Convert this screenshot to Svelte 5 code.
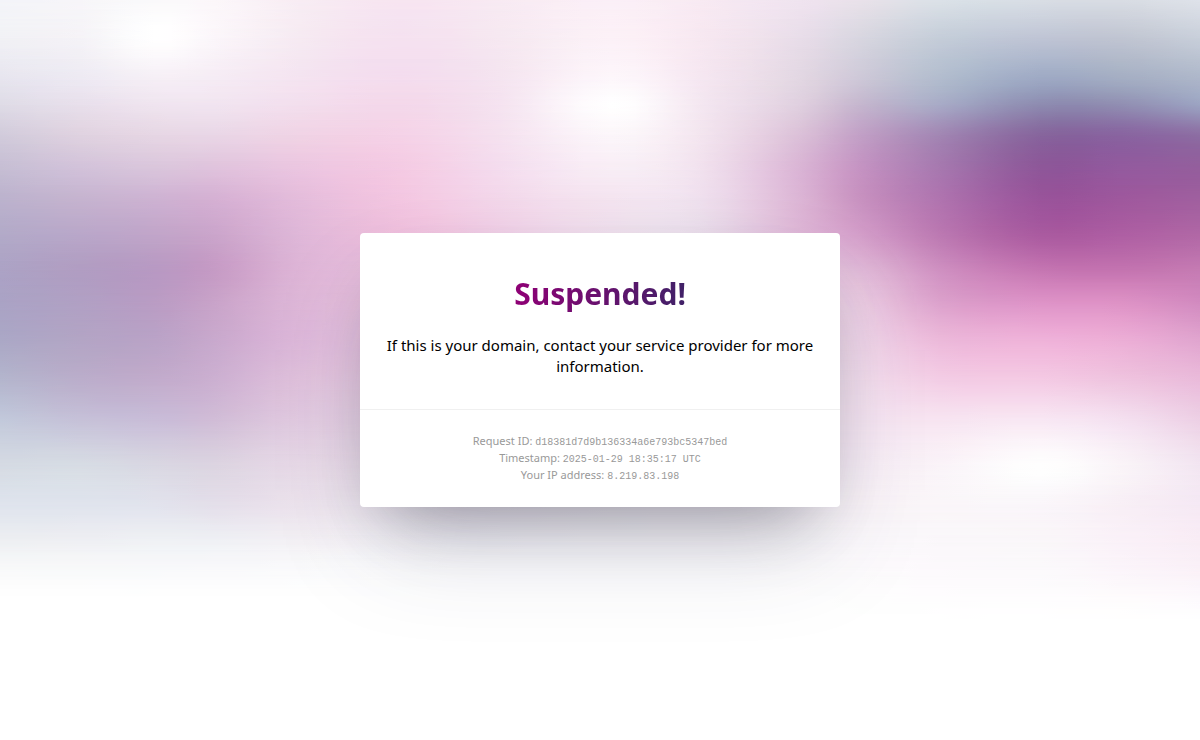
<script lang="ts">
  const details = [
    { label: 'Request ID:', value: 'd18381d7d9b136334a6e793bc5347bed' },
    { label: 'Timestamp:', value: '2025-01-29 18:35:17 UTC' },
    { label: 'Your IP address:', value: '8.219.83.198' }
  ];

  // Colour mesh for the backdrop: columns and rows are on a 1200 x 740 grid
  const columns = [0, 80, 155, 215, 300, 400, 500, 612, 700, 800, 860, 940, 1040, 1120, 1200];
  const mesh = [
    { y: 0, colors: 'f4f5f9 f7f6f9 faf9fb fcf7fa f8edf4 f7e5f1 f8eaf3 fbf0f7 f8eaf3 f0e4f0 e9e2ea dce2e8 d9dee5 d9dde4 dfe3ea' },
    { y: 38, colors: 'f1f1f5 f5f3f7 ffffff fbf6fa f6eaf2 f5e1f0 f6e8f1 fcf1f7 f7e8f1 e8dde9 d8d6e0 c5cdd9 bfc5d5 c0c5d2 c8cfda' },
    { y: 80, colors: 'e6e4ee ede9f2 f5eef5 f5ebf4 f4e3f0 f4dcee f5e4f0 fdf7fb f5e7f1 e2d6e2 cdc7d7 b1bbcd 9da8c3 a3acc2 acb5c9' },
    { y: 105, colors: 'dedbe6 e8dfeb efe4ef f1e4f0 f3deed f4d8ea f5e3f0 ffffff f4e7f1 dfcfdf c5b6ce a8aac6 8e8bb0 918eb2 9ca3c2' },
    { y: 135, colors: 'd1cbdb dfd2e0 e6d6e4 e9d6e6 f0d3e5 f5d2e7 f5e1ef fcf6fa f3e5ef dbc0d8 c2a0c6 a286b3 87659d 8964a0 8d6ea3' },
    { y: 170, colors: 'c5bdd3 d1c1d9 d9c4db dfc2dc ebc5e0 f4cae3 f4dcee f8edf5 f1e1ee dab4d5 c593c2 a778af 8f5799 945a9e 955e9d' },
    { y: 200, colors: 'bbb2cd c5b3cf cdb2d2 d5b0d3 e4bcdb f3c6e1 f3d7ea f4e4f0 efe0ee dcb5d5 c892c0 b074af 9a549b 9f589d a0609f' },
    { y: 235, colors: 'b2aac8 b9a7c9 c1a5c9 cba5cb dfb7d8 efc0dd f0d0e6 efdfec eaddea dfb7d7 d49fca bc79b2 aa5ba0 ae5fa3 b168a6' },
    { y: 270, colors: 'aca3c5 b19dc2 b899c3 c69bc5 deb5d7 e9c1de eccde3 ecd9e8 e8d9e8 e5c6df e1bad8 cf90c1 c576b2 c474b0 c57bb3' },
    { y: 300, colors: 'aaa3c5 b1a0c4 ba9cc4 c9a3c9 deb7d8 e9c3df eccde3 ecd9e8 e8d9e8 ead0e4 ebcbe2 dba0cb dc91c6 dc90c4 d189bf' },
    { y: 340, colors: 'aba8c6 b3a5c5 baa3c7 c9a9cd ddb8da e9c8e1 eccde3 ecd9e8 ecdcea efdaea f0d6e9 ecb9da efb2d9 ecaed6 e0a5cf' },
    { y: 380, colors: 'b4b6cd bbaecb c2accc ccb0d1 e0c1dc e8cde2 ecd2e5 eedeea efe2ed f2e2ee f4dfee f3cde5 f4cae4 efc4df eabbdb' },
    { y: 420, colors: 'c2c9db c6c1d8 c9bdd8 d1bdd7 e1cae0 e8d5e5 eedbe8 f1e4ed f3e7f0 f5e8f1 f6e6f2 f7e4f1 f8e7f3 f4e0f0 edd0e5' },
    { y: 465, colors: 'd5dae3 d7dce4 d9d7e2 dcd4e1 e7d9e7 ece0ea f1e6ee f4ebf2 f6eef4 f7eff5 f8eef6 faf3f8 fefefe faf4f8 f2e5f1' },
    { y: 505, colors: 'dfe4ed e0e4ed e2e3ed e4dfea ece3ed f0eaf1 f3eef4 f6f2f6 f8f4f8 faf5f9 faf4f8 faf6f9 faf6fa f8eff6 f5e9f4' },
    { y: 535, colors: 'ebedf1 ecedf2 edeff3 edeef3 f2eef3 f6f4f8 f8f7fa faf9fb fbf9fb fbf9fb fbf8fb faf7fa faf6f9 faf1f8 f8ecf5' },
    { y: 565, colors: 'f7f8f9 f7f8f9 f7f8fa f8f8fa f9f9fb fcfcfd fdfdfe fdfdfe fdfdfe fdfcfd fdfbfd fcf9fc fbf9fb fbf4fa faf0f7' },
    { y: 600, colors: 'ffffff ffffff ffffff ffffff ffffff ffffff ffffff ffffff ffffff ffffff fefefe fefdfe fefdfe fefcfd fdfafd' },
    { y: 622, colors: 'ffffff ffffff ffffff ffffff ffffff ffffff ffffff ffffff ffffff ffffff ffffff ffffff ffffff ffffff ffffff' }
  ];
  const steps = 4;

  function parseRow(colors: string): number[][] {
    return colors.split(' ').map((hex) => [0, 2, 4].map((i) => parseInt(hex.slice(i, i + 2), 16)));
  }

  // Cubic curve through values placed at uneven positions
  function sample(at: number[], values: number[], i: number, t: number): number {
    const slope = (k: number) => {
      const a = Math.max(k - 1, 0);
      const b = Math.min(k + 1, at.length - 1);
      return (values[b] - values[a]) / (at[b] - at[a]);
    };
    const span = at[i + 1] - at[i];
    const t2 = t * t;
    const t3 = t2 * t;
    return (
      (2 * t3 - 3 * t2 + 1) * values[i] +
      (t3 - 2 * t2 + t) * span * slope(i) +
      (3 * t2 - 2 * t3) * values[i + 1] +
      (t3 - t2) * span * slope(i + 1)
    );
  }

  // Returns the points of a denser line, each with its position and colour
  function refine(at: number[], colors: number[][]) {
    const points: { pos: number; color: number[] }[] = [];
    for (let i = 0; i < at.length - 1; i++) {
      for (let s = 0; s < steps; s++) {
        const t = s / steps;
        points.push({
          pos: at[i] + (at[i + 1] - at[i]) * t,
          color: [0, 1, 2].map((c) => sample(at, colors.map((v) => v[c]), i, t))
        });
      }
    }
    points.push({ pos: at[at.length - 1], color: colors[colors.length - 1] });
    return points;
  }

  const wide = mesh.map((row) => refine(columns, parseRow(row.colors)));
  const lines = wide[0].map((_, x) => refine(mesh.map((row) => row.y), wide.map((row) => row[x].color)));

  // Each band fades in over the one above it
  const bands = lines[0].map((point, i) => {
    const stops = lines
      .map((line, x) => {
        const rgb = line[i].color.map((v) => Math.max(0, Math.min(255, Math.round(v))));
        return `rgb(${rgb.join(' ')}) ${(wide[0][x].pos / 12).toFixed(2)}%`;
      })
      .join(', ');
    const from = i === 0 ? -1 : lines[0][i - 1].pos;
    const mask = `linear-gradient(to bottom, transparent ${(from / 7.4).toFixed(2)}%, #000 ${(point.pos / 7.4).toFixed(2)}%)`;
    return `background-image: linear-gradient(to right, ${stops}); mask-image: ${mask};`;
  });
</script>

<div class="page">
  <div class="backdrop" aria-hidden="true">
    {#each bands as band}
      <div class="band" style={band}></div>
    {/each}
  </div>

  <main class="card">
    <section class="message">
      <h1>Suspended!</h1>
      <p>If this is your domain, contact your service provider for more information.</p>
    </section>
    <footer class="details">
      {#each details as { label, value }}
        <div>{label} <code>{value}</code></div>
      {/each}
    </footer>
  </main>
</div>

<style>
  :global(body) {
    margin: 0;
    background: #fff;
  }

  .page {
    display: grid;
    min-height: 100vh;
    font-family: 'Segoe UI', 'Noto Sans', sans-serif;
    color: #000;
  }

  .backdrop {
    grid-area: 1 / 1;
    display: grid;
  }

  .band {
    grid-area: 1 / 1;
  }

  .card {
    grid-area: 1 / 1;
    place-self: center;
    z-index: 1;
    box-sizing: border-box;
    width: 100%;
    max-width: 480px;
    border-radius: 4px;
    background: #fff;
    text-align: center;
    box-shadow:
      0 50px 100px -20px rgba(50, 50, 93, 0.25),
      0 30px 60px -30px rgba(0, 0, 0, 0.3);
  }

  .message {
    padding: 40px 24px 32px;
  }

  h1 {
    width: fit-content;
    margin: 0 auto 20px;
    font-size: 30px;
    line-height: 42px;
    font-weight: 700;
    color: transparent;
    background: linear-gradient(to right, #8f0075, #402167);
    background-clip: text;
  }

  p {
    margin: 0;
    font-size: 15px;
    line-height: 21px;
  }

  .details {
    padding: 22px 24px 24px;
    border-top: 1px solid #f0f0f0;
    font-size: 11px;
    line-height: 17px;
    color: #999;
  }

  code {
    font-family: 'Liberation Mono', monospace;
    font-size: 10px;
    line-height: 1;
  }
</style>
